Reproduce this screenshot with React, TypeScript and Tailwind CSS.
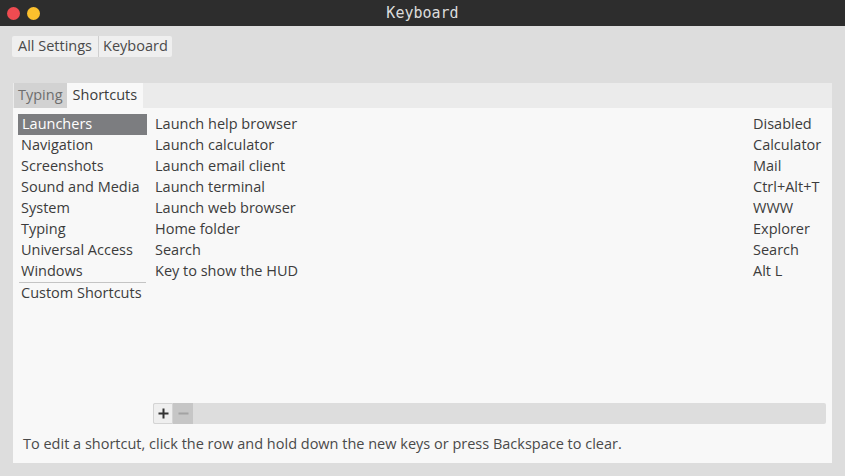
const categories = [
  'Launchers',
  'Navigation',
  'Screenshots',
  'Sound and Media',
  'System',
  'Typing',
  'Universal Access',
  'Windows',
];

const shortcuts = [
  ['Launch help browser', 'Disabled'],
  ['Launch calculator', 'Calculator'],
  ['Launch email client', 'Mail'],
  ['Launch terminal', 'Ctrl+Alt+T'],
  ['Launch web browser', 'WWW'],
  ['Home folder', 'Explorer'],
  ['Search', 'Search'],
  ['Key to show the HUD', 'Alt L'],
];

export default function App() {
  return (
    <div className="h-[476px] w-[845px] overflow-hidden bg-[#dddddd] font-['Open_Sans',sans-serif] text-[14.5px] text-[#3c3c3c]">
      {/* Title bar */}
      <div className="grid h-[26px] grid-cols-3 items-center bg-[#2d2d2d]">
        <div className="flex items-center gap-[7px] pl-[7px]">
          <span className="h-[13px] w-[13px] rounded-full bg-[#ef4b51]" />
          <span className="h-[13px] w-[13px] rounded-full bg-[#fbc02d]" />
        </div>
        <div className="text-center font-['DejaVu_Sans_Mono',monospace] text-[15px] text-[#dcdcdc]">Keyboard</div>
        <div />
      </div>

      {/* Breadcrumb */}
      <div className="pl-[12px] pt-[10px]">
        <div className="flex h-[21px] w-fit items-center rounded-[2px] bg-[#efefef] text-[#4a4a4a]">
          <span className="px-[6px] pb-px">All Settings</span>
          <span className="h-[21px] w-px bg-[#cfcfcf]" />
          <span className="px-[4px] pb-px">Keyboard</span>
        </div>
      </div>

      {/* Panel */}
      <div className="ml-[13px] mt-[26px] w-[819px]">
        <div className="flex h-[25px] bg-[#ebebeb] pl-px">
          <div className="flex items-center bg-[#d2d2d2] px-[4px] pb-px text-[#6e6e6e]">Typing</div>
          <div className="flex items-center bg-[#f8f8f8] px-[6px] pb-px">Shortcuts</div>
        </div>

        <div className="flex h-[355px] flex-col bg-[#f8f8f8]">
          <div className="flex h-[316px] pt-[6px]">
            <div className="ml-[5px] w-[129px]">
              {categories.map((c, i) => (
                <div
                  key={c}
                  className={
                    i === 0
                      ? 'flex h-[21px] items-center bg-[#7c7d80] pb-px pl-[4px] text-white'
                      : 'flex h-[21px] items-center pb-px pl-[3px]'
                  }
                >
                  {c}
                </div>
              ))}
              <div className="mx-px h-px bg-[#c4c4c4]" />
              <div className="flex h-[21px] items-center pb-px pl-[3px]">Custom Shortcuts</div>
            </div>

            <div className="ml-[6px] flex w-[673px] flex-col">
              <div className="flex-1">
                {shortcuts.map(([name, key]) => (
                  <div key={name} className="flex h-[21px] items-center pb-px">
                    <span className="w-[600px] pl-[2px]">{name}</span>
                    <span>{key}</span>
                  </div>
                ))}
              </div>
              <div className="flex h-[21px] rounded-[2px] bg-[#dddddd]">
                <div className="flex w-[20px] items-center justify-center rounded-l-[2px] border border-[#d4d4d4] bg-[#efefef] text-[#333]">
                  <svg width="11" height="11" viewBox="0 0 11 11">
                    <path d="M5.5 0.5v10M0.5 5.5h10" stroke="currentColor" strokeWidth="2" />
                  </svg>
                </div>
                <div className="flex w-[20px] items-center justify-center bg-[#c6c6c6] text-[#a3a3a3]">
                  <svg width="11" height="11" viewBox="0 0 11 11">
                    <path d="M0.5 5.5h10" stroke="currentColor" strokeWidth="2" />
                  </svg>
                </div>
              </div>
            </div>
          </div>

          <div className="mt-[10px] flex h-[21px] items-center pb-px pl-[10px] text-[#4a4a4a]">
            To edit a shortcut, click the row and hold down the new keys or press Backspace to clear.
          </div>
        </div>
      </div>
    </div>
  );
}
